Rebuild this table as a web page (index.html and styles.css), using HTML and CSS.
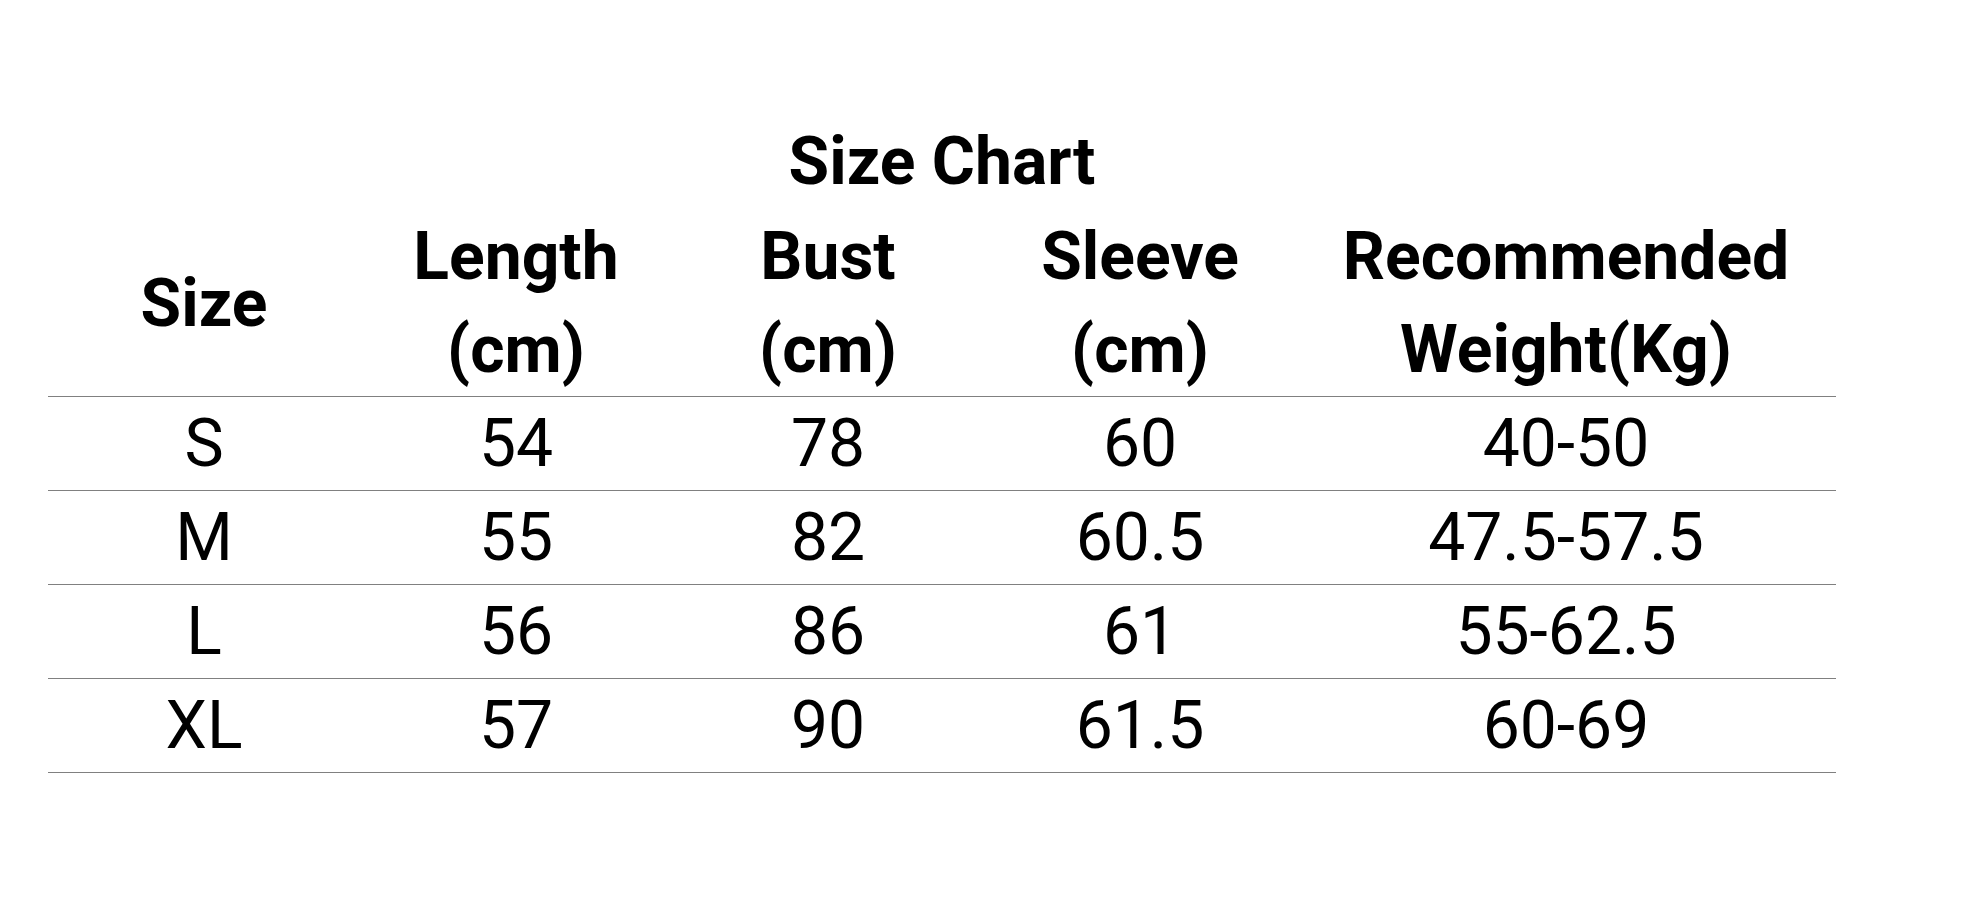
FILE: index.html
```html
<!DOCTYPE html>
<html lang="en">
<head>
<meta charset="utf-8">
<title>Size Chart</title>
<link rel="stylesheet" href="styles.css">
</head>
<body>
<main class="page">
  <table class="chart">
    <caption class="chart-title">Size Chart</caption>
    <colgroup>
      <col class="col-std"><col class="col-std"><col class="col-std"><col class="col-std"><col class="col-wide">
    </colgroup>
    <thead>
      <tr>
        <th>Size</th>
        <th>Length<br>(cm)</th>
        <th>Bust<br>(cm)</th>
        <th>Sleeve<br>(cm)</th>
        <th>Recommended<br>Weight(Kg)</th>
      </tr>
    </thead>
    <tbody>
      <tr><td>S</td><td>54</td><td>78</td><td>60</td><td>40-50</td></tr>
      <tr><td>M</td><td>55</td><td>82</td><td>60.5</td><td>47.5-57.5</td></tr>
      <tr><td>L</td><td>56</td><td>86</td><td>61</td><td>55-62.5</td></tr>
      <tr><td>XL</td><td>57</td><td>90</td><td>61.5</td><td>60-69</td></tr>
    </tbody>
  </table>
</main>
</body>
</html>
```
FILE: styles.css
```css
html, body {
  margin: 0;
  padding: 0;
  background: #ffffff;
}

body {
  font-family: Roboto, "Liberation Sans", sans-serif;
  color: #000000;
}

.page {
  padding: 114px 0 0 48px;
}

.chart {
  width: 1788px;
  border-collapse: collapse;
  table-layout: fixed;
  font-size: 66px;
  line-height: 93px;
}

.col-std {
  width: 312px;
}

.col-wide {
  width: 540px;
}

.chart-title {
  font-weight: 700;
  line-height: 96px;
  text-align: center;
}

.chart th,
.chart td {
  padding: 0;
  text-align: center;
  vertical-align: middle;
  white-space: nowrap;
}

.chart th {
  font-weight: 700;
}

.chart td {
  font-weight: 400;
}

.chart tr {
  border-bottom: 1px solid #808080;
}
```
